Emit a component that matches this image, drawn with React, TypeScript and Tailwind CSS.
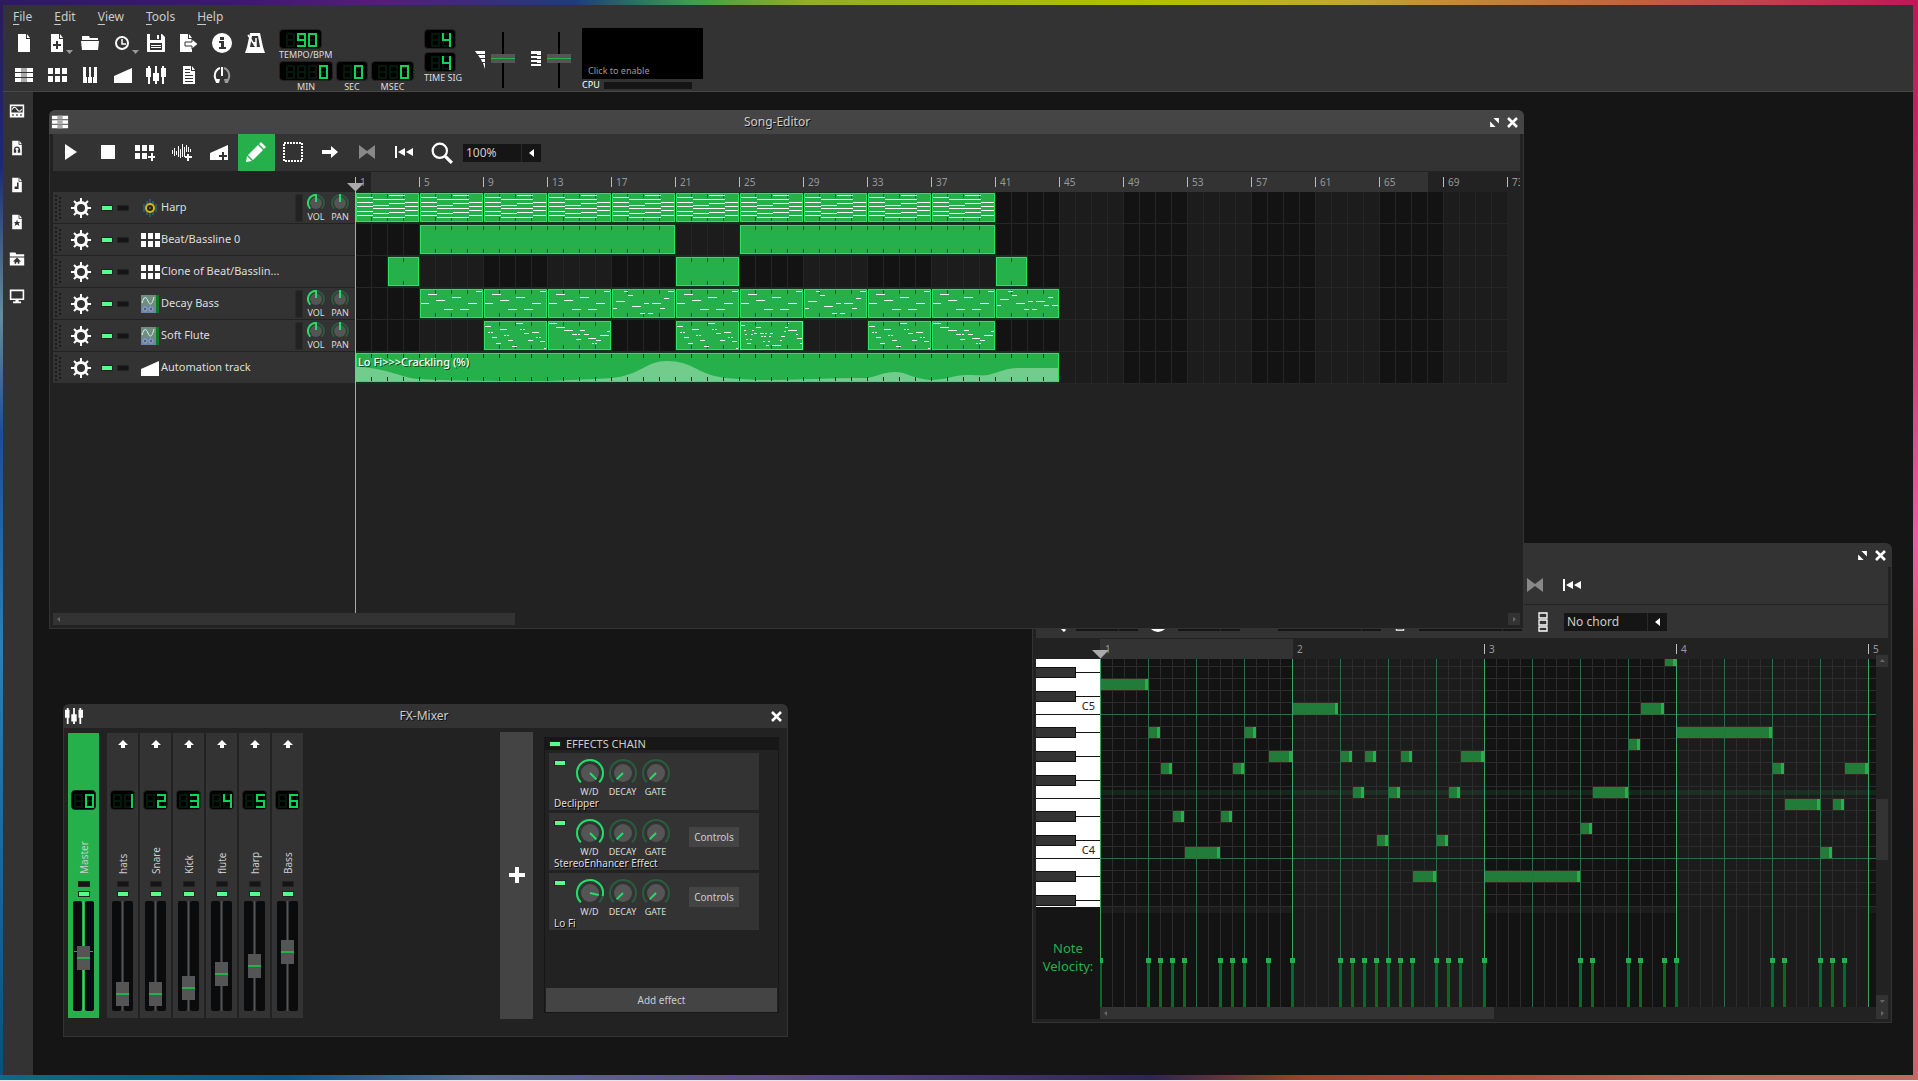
import type { ReactNode } from 'react'

type Note = [x: number, y: number, w: number]

/* ---------- icons ---------- */

function Svg({ children, size = 20, className = '' }: { children: ReactNode; size?: number; className?: string }) {
  return (
    <svg width={size} height={size} viewBox="0 0 20 20" fill="#fff" className={`shrink-0 ${className}`} aria-hidden="true">
      {children}
    </svg>
  )
}

const doc = 'M4 1h8v5h4v13H4z M13 1l3 4h-3z'
const plus = 'M15 11h2v3h3v2h-3v3h-2v-3h-3v-2h3z'

const icons: Record<string, ReactNode> = {
  new: <path d={doc} />,
  template: (
    <>
      <path d={doc} />
      <path d="M9 8h2v3h3v2h-3v3H9v-3H6v-2h3z" fill="#333" />
    </>
  ),
  open: <path d="M2 3h7l1 2h8v2H2z M1 8h18l-1 9H2z" />,
  recent: (
    <>
      <circle cx="9" cy="10" r="6" fill="none" stroke="#fff" strokeWidth="2" />
      <path d="M9 6v5h4" fill="none" stroke="#fff" strokeWidth="1.5" />
    </>
  ),
  save: (
    <>
      <path d="M1 1h15l3 3v15H1z" />
      <path d="M4 1h11v6H4z M4 10h12v7H4z" fill="#333" />
      <path d="M11 2h2v4h-2z M5 12h10v1H5z M5 14h10v1H5z" />
    </>
  ),
  export: (
    <>
      <path d="M1 1h8v5h4v13H1z M10 1l3 4h-3z" />
      <path d="M6 9h7V6l6 5-6 5v-3H6z" stroke="#333" strokeWidth="1" />
    </>
  ),
  info: (
    <>
      <circle cx="10" cy="10" r="10" />
      <path d="M8 4h4v3H8z M7 8h5v6h2v2H7v-2h2v-4H7z" fill="#333" />
    </>
  ),
  metronome: (
    <>
      <path d="M5 0h10l3 14 2 6H0l2-6z" />
      <path d="M7 3h6l2 11H5z" fill="#333" />
      <path d="M3 2l8 12M11 5v9" stroke="#fff" strokeWidth="1.5" />
      <path d="M8 9h3v4H9z" />
    </>
  ),
  song: (
    <>
      <path d="M1 3h18v4H1z M1 8h18v4H1z M1 13h18v4H1z" />
      <path d="M7 3h6v4H7z M7 8h6v4H7z M7 13h6v4H7z" fill="#aaa" />
    </>
  ),
  beat: <path d="M1 3h5v6H1z M8 3h5v6H8z M15 3h5v6h-5z M1 11h5v6H1z M8 11h5v6H8z M15 11h5v6h-5z" />,
  piano: (
    <>
      <path d="M3 2h14v16H3z" />
      <path d="M6 2h3v10H6z M11 2h3v10h-3z M7 12h1v6H7z M12 12h1v6h-1z" fill="#333" />
    </>
  ),
  automation: <path d="M1 11l18-8v15H1z" />,
  mixer: (
    <path d="M2 1h2v2h1v9H4v7H2v-7H0V3h2z M9 1h2v7h2v8h-2v3H9v-3H7V8h2z M16 1h2v2h2v9h-2v7h-2v-7h-1V3h1z" />
  ),
  notes: (
    <>
      <path d="M4 1h8v5h4v13H4z M13 1l3 4h-3z" />
      <path d="M6 4h5v1H6z M6 7h5v1H6z M6 10h8v1H6z M6 13h8v1H6z M6 16h8v1H6z" fill="#333" />
    </>
  ),
  rack: (
    <>
      <path d="M10 2v9" stroke="#fff" strokeWidth="2" />
      <path d="M5 16A8 8 0 0 1 8 3" fill="none" stroke="#fff" strokeWidth="2" />
      <path d="M12 3a8 8 0 0 1 3 13" fill="none" stroke="#999" strokeWidth="2" />
      <path d="M3 14h5l-1 4H4z" />
      <path d="M17 14h-5l1 4h3z" fill="#999" />
    </>
  ),
  play: <path d="M4 2l12 8-12 8z" />,
  stop: <path d="M3 3h14v14H3z" />,
  addBeat: (
    <path d="M0 3h5v6H0z M7 3h5v6H7z M14 3h5v6h-5z M0 11h5v6H0z M7 11h5v6H7z M16 11h2v3h2v2h-2v3h-2v-3h-3v-2h3z" />
  ),
  addSample: (
    <path d="M0 8h1v4H0z M2 6h1v8H2z M4 9h1v4H4z M6 4h1v11H6z M8 7h1v9H8z M10 2h1v13h-1z M12 5h1v10h-1z M14 3h1v7h-1z M16 5h1v5h-1z M18 7h1v3h-1z M15 12h2v2h3v2h-3v3h-2v-3h-2v-2h2z" />
  ),
  addAutomation: (
    <>
      <path d="M1 11l18-8v15H1z" />
      <path d={plus} transform="translate(-2 -1)" fill="#333" />
    </>
  ),
  pencil: <path d="M15 0l5 5-2 2-5-5z M12 3l5 5-10 10-5-5z M1 14l5 5-6 1z" />,
  select: (
    <path d="M1 1h18v18H1z" fill="none" stroke="#fff" strokeWidth="2" strokeDasharray="2 1" />
  ),
  move: <path d="M2 8h9V4l7 6-7 6v-4H2z" />,
  ruler: <path d="M2 3l8 6 8-6v14l-8-6-8 6z" fill="#888" />,
  rewind: <path d="M1 4h2v12H1z M11 6v8l-7-4z M19 6v8l-7-4z" />,
  zoom: (
    <>
      <circle cx="8" cy="8" r="6.5" fill="none" stroke="#fff" strokeWidth="2" />
      <path d="M13 13l6 6" stroke="#fff" strokeWidth="3" />
    </>
  ),
  chord: <path d="M6 1h8v5H6z M6 8h8v5H6z M6 15h8v4H6z" fill="none" stroke="#fff" strokeWidth="1.3" />,
  gear: (
    <>
      <circle cx="10" cy="10" r="5.5" fill="none" stroke="#fff" strokeWidth="3" />
      <path
        d="M10 0v4M10 16v4M0 10h4M16 10h4M3 3l3 3M14 14l3 3M17 3l-3 3M6 14l-3 3"
        stroke="#fff"
        strokeWidth="2"
      />
    </>
  ),
  harp: (
    <>
      <path d="M10 1v18M7 3v14M13 3v14M4 6v8M16 6v8" stroke="#2b7a99" strokeWidth="1" />
      <circle cx="10" cy="10" r="4" fill="#222" stroke="#d9b800" strokeWidth="2" />
      <circle cx="10" cy="10" r="1" fill="#8a7400" />
    </>
  ),
  synth: (
    <>
      <path d="M1 1h18v18H1z" fill="#6d8f80" />
      <path d="M1 12h15v7H1z" fill="#6f84a6" />
      <path d="M2 9c2-7 4-7 6-2s4 4 6-4" fill="none" stroke="#e6f0ea" />
      <circle cx="5" cy="15" r="2" fill="#4d5f90" stroke="#9dabc8" />
      <circle cx="11" cy="15" r="2" fill="#4d5f90" stroke="#9dabc8" />
      <path d="M16 1h3v18h-3z" fill="#0f7a2c" />
    </>
  ),
  sideInstruments: (
    <>
      <path
        d="M1 2h18v16H1z M3 4v8h14V4z M4 14v2h2v-2z M9 14v2h2v-2z M14 14v2h2v-2z"
        fillRule="evenodd"
      />
      <path d="M4 8c2-4 4-3 6 0s4 3 6 0" fill="none" stroke="#fff" strokeWidth="1.3" />
    </>
  ),
  sideSamples: (
    <>
      <path d={doc} />
      <path d="M7 14v-2a3 3 0 0 1 6 0v2" fill="none" stroke="#333" strokeWidth="1.5" />
      <path d="M6 12h3v4H6z M11 12h3v4h-3z" fill="#333" />
    </>
  ),
  sidePresets: (
    <>
      <path d={doc} />
      <path d="M10 7h2v8H7v-3h3z" fill="#333" />
    </>
  ),
  sideStar: (
    <>
      <path d={doc} />
      <path d="M10 7l1 3h3l-2 2 1 3-3-2-3 2 1-3-2-2h3z" fill="#333" />
    </>
  ),
  sideHome: (
    <>
      <path d="M1 2h7l1 2h10v3H1z M1 8h18v10H1z" />
      <path d="M10 8l5 5h-2v3h-2v-2H9v2H7v-3H5z" fill="#333" />
    </>
  ),
  sideComputer: <path d="M1 2h18v13H1z M3 4v9h14V4z M8 15h4v2h3v2H5v-2h3z" fillRule="evenodd" />,
  close: <path d="M4 4l12 12M16 4L4 16" stroke="#fff" strokeWidth="3.5" />,
  maximize: <path d="M8 2h10v10z M2 8v10h10z" />,
}

function Icon({ name, size }: { name: string; size?: number }) {
  return <Svg size={size}>{icons[name]}</Svg>
}

/* ---------- small controls ---------- */

const segments: Record<string, [number, number, number, number]> = {
  a: [0, 0, 9, 2],
  b: [7, 0, 2, 8],
  c: [7, 6, 2, 8],
  d: [0, 12, 9, 2],
  e: [0, 6, 2, 8],
  f: [0, 0, 2, 8],
  g: [0, 6, 9, 2],
}

const digitSegments: Record<string, string> = {
  ' ': '',
  '0': 'abcdef',
  '1': 'bc',
  '2': 'abged',
  '3': 'abgcd',
  '4': 'fgbc',
  '5': 'afgcd',
  '6': 'afgecd',
  '9': 'abcdfg',
}

function Lcd({ value, tight = false }: { value: string; tight?: boolean }) {
  return (
    <output
      aria-label={value.trim()}
      className={`flex h-5 w-fit items-center gap-[2px] rounded-sm border border-[#222] bg-black pt-[2px] ${tight ? 'pr-px pl-[2px]' : 'pr-1 pl-[6px]'}`}
    >
      {value.split('').map((char, i) => (
        <svg key={i} width="9" height="14" aria-hidden="true">
          {Object.entries(segments).map(([id, [x, y, w, h]]) => (
            <rect key={id} x={x} y={y} width={w} height={h} fill="#02190c" />
          ))}
          {Object.entries(segments)
            .filter(([id]) => digitSegments[char].includes(id))
            .map(([id, [x, y, w, h]]) => (
              <rect key={id} x={x} y={y} width={w} height={h} fill="#0bd556" />
            ))}
        </svg>
      ))}
    </output>
  )
}

function Led({ label, on = false }: { label: string; on?: boolean }) {
  return (
    <input
      type="checkbox"
      aria-label={label}
      defaultChecked={on}
      className="block h-[6px] w-3 shrink-0 appearance-none border border-[#222] bg-[#151515] checked:bg-[#55ff8c]"
    />
  )
}

function polar(c: number, r: number, deg: number) {
  const a = ((deg - 90) * Math.PI) / 180
  return `${c + r * Math.cos(a)} ${c + r * Math.sin(a)}`
}

function arc(c: number, r: number, from: number, to: number) {
  return `M${polar(c, r, from)} A${r} ${r} 0 ${to - from > 180 ? 1 : 0} 1 ${polar(c, r, to)}`
}

function Knob({ label, angle, lit, big = false }: { label: string; angle: number; lit: boolean; big?: boolean }) {
  const size = big ? 30 : 20
  const c = size / 2
  const r = big ? 13 : 8
  return (
    <label className={`flex flex-col items-center text-[9px] leading-[10px] text-[#ddd] ${big ? 'w-[33px]' : 'w-6'}`}>
      <span className="relative block">
        <svg width={size} height={size - 1} fill="none" strokeWidth="2" className="block">
          <path d={arc(c, r, -135, 135)} stroke="#2a5c3e" />
          {lit && <path d={arc(c, r, -135, angle)} stroke="#22dd6a" />}
          <circle cx={c} cy={c} r={big ? 9 : 6} fill="#555" />
          <path d={`M${big ? `${c} ${c}` : polar(c, 1, angle)} L${polar(c, 9, angle)}`} stroke="#22dd6a" />
        </svg>
        <input type="range" min={-135} max={135} defaultValue={angle} className="absolute inset-0 h-full w-full opacity-0" />
      </span>
      {label}
    </label>
  )
}

function Combo({ label, value, width }: { label: string; value: string; width: string }) {
  return (
    <span className={`relative block h-[18px] shrink-0 bg-[#151515] ${width}`}>
      <select
        aria-label={label}
        className="block h-full w-full appearance-none bg-transparent pl-[3px] text-xs leading-[18px] text-[#ccc]"
      >
        <option>{value}</option>
      </select>
      <svg width="20" height="18" className="pointer-events-none absolute top-0 right-0" aria-hidden="true">
        <path d="M0 0h1v18H0z" fill="#2a2a2a" />
        <path d="M13 5v8l-5-4z" fill="#fff" />
      </svg>
    </span>
  )
}

function ToolButton({ name, label, active = false }: { name: string; label: string; active?: boolean }) {
  return (
    <button
      aria-label={label}
      className={`flex h-[37px] w-[37px] shrink-0 items-center justify-center pr-px pb-px ${active ? 'bg-[#25b04b]' : ''}`}
    >
      <Icon name={name} />
    </button>
  )
}

function ScrollButton({ label, d }: { label: string; d: string }) {
  return (
    <button aria-label={label} className="block h-3 w-3 shrink-0 bg-[#333]">
      <svg width="12" height="12" className="block">
        <path d={d} fill="#666" />
      </svg>
    </button>
  )
}

const arrowLeft = 'M7 4v5L4 6z'
const arrowRight = 'M5 4v5l3-3z'

function TitleBar({ icon, title, tone, resizable = false }: { icon: string; title: string; tone: string; resizable?: boolean }) {
  return (
    <header className={`flex h-6 shrink-0 items-center rounded-t-md px-[2px] ${tone}`}>
      <Icon name={icon} size={18} />
      <h2 className="flex-1 pr-1 text-center text-xs text-[#ccc] [text-shadow:1px_1px_0_#111]">{title}</h2>
      <div className="flex items-center gap-[5px] pr-[2px]">
        {resizable && (
          <button aria-label={`Maximize ${title}`}>
            <Icon name="maximize" size={11} />
          </button>
        )}
        <button aria-label={`Close ${title}`}>
          <Icon name="close" size={15} />
        </button>
      </div>
    </header>
  )
}

/* ---------- main toolbar ---------- */

const menus = ['File', 'Edit', 'View', 'Tools', 'Help']

const fileTools = [
  ['new', 'New project'],
  ['template', 'New from template'],
  ['open', 'Open project'],
  ['recent', 'Recent projects'],
  ['save', 'Save'],
  ['export', 'Export'],
  ['info', 'About'],
  ['metronome', 'Metronome'],
]

const windowTools = [
  ['song', 'Song editor'],
  ['beat', 'Beat editor'],
  ['piano', 'Piano roll'],
  ['automation', 'Automation editor'],
  ['mixer', 'Mixer'],
  ['notes', 'Project notes'],
  ['rack', 'Controller rack'],
]

function ToolRow({ tools }: { tools: string[][] }) {
  return (
    <div className="flex h-8 items-center">
      {tools.map(([name, label]) => (
        <button key={name} aria-label={label} className="relative flex h-8 w-[33px] items-center justify-center">
          <Icon name={name} />
          {(name === 'template' || name === 'recent') && (
            <svg width="7" height="4" className="absolute right-0 bottom-[5px]">
              <path d="M0 0h7L3.500 4z" fill="#999" />
            </svg>
          )}
        </button>
      ))}
    </div>
  )
}

function LabelledLcd({ value, label }: { value: string; label: string }) {
  return (
    <div className="flex flex-col items-center text-[9px] leading-3 text-[#ddd]">
      <Lcd value={value} />
      {label}
    </div>
  )
}

function MasterSlider({ label, children }: { label: string; children: ReactNode }) {
  return (
    <div className="flex items-center gap-[6px]">
      <svg width="10" height="18" fill="#fff" aria-hidden="true">
        {children}
      </svg>
      <input
        type="range"
        aria-label={label}
        min={0}
        max={47}
        defaultValue={25}
        className="h-14 w-6 appearance-none bg-[linear-gradient(90deg,transparent_11px,#000_11px,#000_13px,transparent_13px)] [direction:rtl] [writing-mode:vertical-lr] [&::-webkit-slider-thumb]:h-[9px] [&::-webkit-slider-thumb]:w-6 [&::-webkit-slider-thumb]:appearance-none [&::-webkit-slider-thumb]:bg-[linear-gradient(#555_4px,#25b04b_4px,#25b04b_5px,#555_5px)]"
      />
    </div>
  )
}

function MainBar() {
  return (
    <header className="flex h-[87px] shrink-0 border-b border-[#484848] bg-[#333]">
      <div className="w-[275px] shrink-0">
        <nav className="flex h-[22px] items-center gap-[22px] pt-[2px] pl-[10px] text-xs text-[#ccc]">
          {menus.map((m) => (
            <button key={m} className="underline-offset-3 first-letter:underline">
              {m}
            </button>
          ))}
        </nav>
        <div className="pl-1">
          <ToolRow tools={fileTools} />
          <ToolRow tools={windowTools} />
        </div>
      </div>

      <div className="flex pt-6">
        <div className="mr-3 w-[134px] pl-px">
          <div className="flex w-fit flex-col text-[9px] leading-3 text-[#ddd]">
            <Lcd value=" 90" />
            TEMPO/BPM
          </div>
          <div className="flex gap-[3px]">
            <LabelledLcd value="   0" label="MIN" />
            <LabelledLcd value=" 0" label="SEC" />
            <LabelledLcd value="  0" label="MSEC" />
          </div>
        </div>
        <div className="mr-[13px] flex w-[38px] flex-col gap-[3px] text-[9px] leading-3 whitespace-nowrap text-[#ddd]">
          <Lcd value=" 4" />
          <div>
            <Lcd value=" 4" />
            TIME SIG
          </div>
        </div>
        <div className="flex items-start gap-4 pt-[3px]">
          <MasterSlider label="Master volume">
            <path d="M0 0h10v3H2z M3 4h7v3H5z M6 8h4v3H7z M8 12h2v6z" />
          </MasterSlider>
          <MasterSlider label="Master pitch">
            <path d="M0 0h10v15H0v-2h6v-2H0V9h6V7H0V5h6V3H0z" />
            <path d="M6 4h4v1H6z M6 8h4v1H6z M6 12h4v1H6z" fill="#333" />
          </MasterSlider>
        </div>
        <div className="-mt-px ml-[11px] w-[121px] text-[9px]">
          <button className="flex h-[51px] w-full items-end bg-black px-[6px] pb-[2px] leading-3 text-[#999]">
            Click to enable
          </button>
          <div className="flex h-3 items-center gap-1 text-white">
            CPU
            <div className="h-[7px] w-[88px] bg-[#151515]" />
          </div>
        </div>
      </div>
    </header>
  )
}

const sideTabs = [
  ['sideInstruments', 'Instrument plugins'],
  ['sideSamples', 'My samples'],
  ['sidePresets', 'My presets'],
  ['sideStar', 'My projects'],
  ['sideHome', 'My home'],
  ['sideComputer', 'Root directory'],
]

function SideBar() {
  return (
    <nav className="w-[30px] shrink-0 bg-[#333]">
      {sideTabs.map(([name, label]) => (
        <button key={name} aria-label={label} className="flex h-[37px] w-7 items-center justify-center">
          <Icon name={name} size={16} />
        </button>
      ))}
    </nav>
  )
}

/* ---------- song editor ---------- */

const tracks = [
  { name: 'Harp', icon: 'harp', instrument: true },
  { name: 'Beat/Bassline 0', icon: 'beat', instrument: false },
  { name: 'Clone of Beat/Basslin...', icon: 'beat', instrument: false },
  { name: 'Decay Bass', icon: 'synth', instrument: true },
  { name: 'Soft Flute', icon: 'synth', instrument: true },
  { name: 'Automation track', icon: 'automation', instrument: false },
]

const songTools = [
  ['play', 'Play song'],
  ['stop', 'Stop song'],
  ['addBeat', 'Add beat/bassline'],
  ['addSample', 'Add sample track'],
  ['addAutomation', 'Add automation track'],
  ['pencil', 'Draw mode'],
  ['select', 'Edit mode'],
  ['move', 'Auto scroll'],
  ['ruler', 'Loop points'],
  ['rewind', 'After stopping go back to beginning'],
]

const harp: Note[] = [
  [1, 4, 16], [33, 2, 16], [17, 6, 32], [1, 9, 16], [49, 9, 13], [33, 10, 16], [17, 12, 16], [1, 13, 16], [49, 13, 13],
  [17, 15, 32], [49, 17, 13], [1, 18, 16], [33, 19, 16], [17, 20, 16], [1, 22, 16], [49, 22, 13], [17, 24, 32],
]
const bassA: Note[] = [
  [8, 5, 9], [56, 2, 6], [32, 8, 9], [16, 11, 9], [1, 14, 8], [48, 14, 9], [24, 20, 9], [40, 20, 9],
]
const bassB: Note[] = [
  [12, 2, 4], [56, 2, 6], [16, 6, 5], [52, 9, 5], [4, 12, 9], [32, 14, 5], [40, 14, 9], [20, 17, 9], [1, 19, 4],
  [48, 19, 5], [28, 24, 5], [36, 24, 5],
]
const bassC: Note[] = [
  [12, 2, 5], [16, 6, 5], [4, 10, 9], [52, 8, 5], [32, 12, 5], [40, 12, 9], [20, 14, 9], [1, 16, 4], [48, 16, 5],
  [56, 16, 6], [28, 20, 5], [36, 20, 5],
]
const fluteA: Note[] = [
  [32, 2, 7], [1, 5, 6], [16, 8, 7], [36, 8, 2], [39, 8, 2], [4, 11, 2], [7, 11, 2], [48, 11, 7], [40, 12, 5],
  [20, 14, 2], [23, 14, 2], [8, 16, 5], [52, 16, 2], [55, 16, 2], [24, 19, 5], [44, 19, 5], [56, 20, 5], [12, 22, 5],
  [28, 25, 5], [60, 27, 2],
]
const fluteB: Note[] = [
  [1, 2, 8], [8, 6, 9], [16, 9, 9], [59, 10, 3], [32, 9, 5], [24, 13, 5], [30, 13, 2], [36, 13, 5], [52, 14, 9],
  [40, 17, 8], [28, 18, 5], [48, 19, 5], [44, 22, 2], [47, 22, 2],
]
const fluteC: Note[] = [
  [1, 4, 4], [48, 2, 1], [45, 6, 3], [16, 6, 5], [4, 9, 2], [12, 9, 2], [44, 10, 2], [48, 9, 9], [5, 13, 2],
  [11, 13, 2], [14, 12, 3], [20, 12, 4], [25, 12, 2], [30, 12, 3], [21, 15, 2], [24, 15, 2], [29, 15, 2], [41, 15, 4],
  [56, 13, 2], [57, 17, 5], [6, 18, 2], [10, 18, 2], [23, 20, 2], [28, 20, 2], [40, 19, 2], [7, 22, 4], [60, 22, 2],
  [26, 24, 3], [32, 24, 9],
]

type Clip = { row: number; start: number; bars: number; notes?: Note[]; selected?: boolean }

const clips: Clip[] = [
  ...[0, 4, 8, 12, 16, 20, 24, 28, 32, 36].map((start) => ({ row: 0, start, bars: 4, notes: harp })),
  { row: 1, start: 4, bars: 16 },
  { row: 1, start: 24, bars: 16 },
  { row: 2, start: 2, bars: 2 },
  { row: 2, start: 20, bars: 4 },
  { row: 2, start: 40, bars: 2 },
  ...[4, 8, 12, 20, 24, 32, 36].map((start) => ({ row: 3, start, bars: 4, notes: bassA })),
  { row: 3, start: 16, bars: 4, notes: bassB },
  { row: 3, start: 28, bars: 4, notes: bassB },
  { row: 3, start: 40, bars: 4, notes: bassC },
  { row: 4, start: 8, bars: 4, notes: fluteA },
  { row: 4, start: 12, bars: 4, notes: fluteB },
  { row: 4, start: 20, bars: 4, notes: fluteA },
  { row: 4, start: 24, bars: 4, notes: fluteC, selected: true },
  { row: 4, start: 32, bars: 4, notes: fluteA },
  { row: 4, start: 36, bars: 4, notes: fluteB },
  { row: 5, start: 0, bars: 44 },
]

const automation =
  'M0 14C12 14 20 16 30 18C42 21 50 25 62 26C96 28 150 28 190 28C215 27 240 26 256 25C285 22 290 8 311 8C336 8 340 20 364 24' +
  'C372 26 390 26 404 27C440 27 480 25 511 25C522 23 528 19 539 19C550 19 558 26 574 27C590 27 598 22 611 22C622 22 628 23 632 22' +
  'C645 19 650 15 664 15H702V28H0z'

function SongClip({ row, start, bars, notes, selected }: Clip) {
  const w = bars * 16 - 1
  const marks = Array.from({ length: bars - 1 }, (_, i) => (i + 1) * 16 - 1)
  return (
    <g transform={`translate(${start * 16 + 1} ${row * 32 + 1})`}>
      <rect x={-1} y={-1} width={w + 2} height={31} fill="#12351d" />
      <rect x={0.5} y={0.5} width={w - 1} height={28} fill="#25b04b" stroke={selected ? '#4dff80' : '#2be35f'} />
      {row === 5 && <path d={automation} fill="#72cc8b" />}
      {marks.map((x) => (
        <path key={x} d={`M${x} 1h1v4h-1z M${x} 24h1v4h-1z`} fill={row === 5 ? '#063a14' : '#0f6326'} />
      ))}
      {notes?.map(([x, y, nw], i) => (
        <rect key={i} x={x} y={y} width={nw} height={1} fill="#fff" />
      ))}
    </g>
  )
}

function SongGrid() {
  return (
    <svg width="1152" height="192" className="block" aria-label="Song arrangement">
      {Array.from({ length: 18 }, (_, i) => (
        <rect key={i} x={i * 64} width="64" height="192" fill={i % 2 ? '#1c1c1c' : '#131313'} />
      ))}
      {Array.from({ length: 73 }, (_, i) => (
        <rect key={i} x={i * 16} width="1" height="192" fill="#262626" />
      ))}
      {tracks.map((t, i) => (
        <rect key={t.name} y={i * 32 + 31} width="1152" height="1" fill="#262626" />
      ))}
      {clips.map((clip) => (
        <SongClip key={`${clip.row}-${clip.start}`} {...clip} />
      ))}
    </svg>
  )
}

function TrackHead({ name, icon, instrument }: { name: string; icon: string; instrument: boolean }) {
  return (
    <li className="flex h-8 items-center border-b border-[#222] bg-[#333]">
      <svg width="10" height="28" className="ml-[2px]" aria-hidden="true">
        <path d="M1 1v26M5 3v24" stroke="#1c1c1c" strokeWidth="2" strokeDasharray="2 2" />
      </svg>
      <button aria-label={`${name} actions`} className="ml-[6px]">
        <Icon name="gear" />
      </button>
      <div className="ml-[10px] flex gap-1">
        <Led label={`Mute ${name}`} on />
        <Led label={`Solo ${name}`} />
      </div>
      <button className="ml-[11px] flex items-center gap-px text-[11px] whitespace-nowrap text-[#ddd]">
        <Icon name={icon} />
        {name}
      </button>
      {instrument && (
        <div className="ml-auto flex h-[29px] items-start pr-[3px]">
          <span className="mt-px mr-px h-7 w-2 border border-[#2a2a2a] bg-[#222]" />
          <Knob label="VOL" angle={0} lit />
          <Knob label="PAN" angle={0} lit={false} />
        </div>
      )}
    </li>
  )
}

function SongEditor() {
  return (
    <section className="absolute top-[18px] left-4 z-20 flex h-[519px] w-[1475px] flex-col">
      <TitleBar icon="song" title="Song-Editor" tone="bg-[#454545]" resizable />
      <div className="relative flex min-h-0 flex-1 flex-col border border-t-0 border-[#333] bg-[#222] px-[3px] pb-[3px]">
        <div className="flex h-[37px] shrink-0 items-center bg-[#333]">
          {songTools.map(([name, label]) => (
            <ToolButton key={name} name={name} label={label} active={name === 'pencil'} />
          ))}
          <span className="mr-[10px] ml-2">
            <Icon name="zoom" size={22} />
          </span>
          <Combo label="Zoom" value="100%" width="w-[78px]" />
        </div>

        <div className="mt-px ml-[302px] flex h-5 shrink-0 items-center overflow-hidden bg-[linear-gradient(90deg,#222_16px,#333_16px,#333_1073px,#222_1073px)]">
          {Array.from({ length: 19 }, (_, i) => (
            <span key={i} className="h-[10px] w-16 shrink-0 border-l border-[#bbb] pl-1 text-[10px] leading-[10px] text-[#999]">
              {i * 4 + 1}
            </span>
          ))}
        </div>

        <div className="flex shrink-0">
          <ul className="w-[302px] shrink-0">
            {tracks.map((t) => (
              <TrackHead key={t.name} {...t} />
            ))}
          </ul>
          <div className="relative">
            <SongGrid />
            <span className="absolute top-[162px] left-[3px] text-[11px] leading-4 font-medium text-white [text-shadow:1px_1px_0_#0a4a1c]">
              Lo Fi&gt;&gt;&gt;Crackling (%)
            </span>
          </div>
        </div>

        <div className="flex-1" />
        <div className="flex h-3 shrink-0 justify-between">
          <div className="flex w-[462px] bg-[#333]">
            <ScrollButton label="Scroll left" d={arrowLeft} />
          </div>
          <ScrollButton label="Scroll right" d={arrowRight} />
        </div>

        {/* play head */}
        <svg width="17" height="9" className="absolute top-[49px] left-[297px]">
          <path d="M0 0h17L8.500 8.500z" fill="#aaa" />
        </svg>
        <div className="absolute top-[57px] bottom-[15px] left-[305px] w-px bg-[#aaa]" />
      </div>
    </section>
  )
}

/* ---------- piano roll ---------- */

// [column, semitone row, columns]
const pianoNotes: Note[] = [
  [0, 0, 4], [4, 4, 1], [5, 7, 1], [6, 11, 1], [7, 14, 3], [10, 11, 1], [11, 7, 1], [12, 4, 1], [14, 6, 2],
  [16, 2, 4], [20, 6, 1], [21, 9, 1], [22, 6, 1], [23, 13, 1], [24, 9, 1], [25, 6, 1], [26, 16, 2], [28, 13, 1],
  [29, 9, 1], [30, 6, 2], [32, 16, 8], [40, 12, 1], [41, 9, 3], [44, 5, 1], [45, 2, 2], [47, -2, 1], [48, 4, 8],
  [56, 7, 1], [57, 10, 3], [60, 14, 1], [61, 10, 1], [62, 7, 2],
]

function PianoGrid() {
  return (
    <svg width="776" height="348" className="block" aria-label="Notes">
      {[0, 1, 2, 3, 4].map((bar) => (
        <rect key={bar} x={bar * 192} width="192" height="348" fill={bar % 2 ? '#1c1c1c' : '#131313'} />
      ))}
      <rect y="248" width="776" height="6" fill="#1c1c1c" />
      {Array.from({ length: 21 }, (_, i) => (
        <rect key={i} y={i * 12 + 7} width="776" height="1" fill="#2c2c2c" />
      ))}
      {Array.from({ length: 65 }, (_, i) => (
        <rect key={i} x={i * 12} width="1" height="348" fill="#2c2c2c" />
      ))}
      <rect y="131" width="776" height="5" fill="#25b04b" opacity="0.13" />
      <rect y="55" width="776" height="1" fill="#2c6e44" />
      <rect y="199" width="776" height="1" fill="#2c6e44" />
      {pianoNotes.map(([col, row, len]) => {
        const w = len * 12 - (col === 16 ? 3 : 1)
        return (
          <g key={`${col}-${row}`} transform={`translate(${col * 12 + 1} ${row * 12 + 20})`}>
            <rect width={w} height="11" fill="#217c39" />
            <rect x={w - 3} width="3" height="11" fill="#25b04b" />
          </g>
        )
      })}
      {Array.from({ length: 17 }, (_, i) => (
        <rect key={i} x={i * 48} width="1" height="348" fill={i % 4 ? '#2c6e44' : '#3fa163'} />
      ))}
      {pianoNotes.map(([col]) => (
        <g key={col} transform={`translate(${col * 12} 299)`}>
          <rect x="-1" y="5" width="3" height="44" fill="#076b28" />
          <rect x="-2" width="5" height="5" fill="#25b04b" />
        </g>
      ))}
    </svg>
  )
}

function PianoKeys() {
  return (
    <div className="relative h-[248px] bg-white text-[11px] leading-4 text-[#222]">
      <svg width="64" height="248" className="block" aria-hidden="true">
        {[13, 37, 73, 97, 121, 157, 181, 217, 241].map((y) => (
          <rect key={y} x="40" y={y} width="24" height="1" fill="#151515" />
        ))}
        {[55, 139, 199].map((y) => (
          <rect key={y} y={y} width="64" height="1" fill="#151515" />
        ))}
        {[8, 32, 68, 92, 116, 152, 176, 212, 236].map((y) => (
          <rect key={y} x="-0.5" y={y + 0.5} width="40" height="10" fill="#333" stroke="#111" />
        ))}
      </svg>
      <span className="absolute top-[39px] right-[5px]">C5</span>
      <span className="absolute top-[183px] right-[5px]">C4</span>
    </div>
  )
}

function PianoRoll() {
  return (
    <section className="absolute top-[451px] left-[999px] z-10 flex h-[480px] w-[860px] flex-col">
      <TitleBar icon="piano" title="Piano-Roll" tone="bg-[#333]" resizable />
      <div className="flex flex-1 flex-col border border-t-0 border-[#333] bg-[#222] px-[3px] pb-[3px]">
        <div className="flex h-[37px] shrink-0 bg-[#333]">
          <div className="w-[481px]" />
          <ToolButton name="ruler" label="Loop points" />
          <ToolButton name="rewind" label="Go back to beginning" />
        </div>
        <div className="mt-px flex h-[33px] shrink-0 items-center bg-[#333]">
          <div className="flex w-[488px] items-center gap-[10px] overflow-hidden pl-[10px]">
            <Icon name="zoom" />
            <Combo label="Zoom level" value="100%" width="w-[62px]" />
            <Icon name="info" />
            <Combo label="Quantization" value="1/16" width="w-[62px]" />
            <Icon name="recent" size={18} />
            <Combo label="Note length" value="Last note" width="w-[103px]" />
            <Icon name="chord" size={18} />
            <Combo label="Scale" value="No scale" width="w-[103px]" />
          </div>
          <span className="mr-[11px] ml-[9px]">
            <Icon name="chord" />
          </span>
          <Combo label="Chord" value="No chord" width="w-[103px]" />
        </div>

        <div className="mt-px flex min-h-0 flex-1">
          <div className="flex w-16 shrink-0 flex-col pt-5">
            <PianoKeys />
            <div className="flex flex-1 flex-col items-center bg-[#151515] pt-8 text-center text-[13px] leading-[18px] text-[#25b04b]">
              Note Velocity:
            </div>
          </div>
          <div className="flex w-[776px] flex-col">
            <div className="relative flex h-5 shrink-0 items-center bg-[linear-gradient(90deg,#333_193px,#222_193px)]">
              {[1, 2, 3, 4, 5].map((n) => (
                <span
                  key={n}
                  className={`h-[10px] shrink-0 border-l pl-1 text-[10px] leading-[10px] text-[#999] ${n === 5 ? 'w-2' : 'w-48'} ${n < 3 ? 'border-transparent' : 'border-[#bbb]'}`}
                >
                  {n}
                </span>
              ))}
              <svg width="17" height="9" className="absolute bottom-0 -left-2">
                <path d="M0 0h17L8.500 8.500z" fill="#aaa" />
              </svg>
            </div>
            <PianoGrid />
            <div className="flex h-3 w-[394px] bg-[#333]">
              <ScrollButton label="Scroll notes left" d={arrowLeft} />
            </div>
          </div>
          <div className="flex w-3 flex-col pt-4">
            <ScrollButton label="Scroll notes up" d="M4 7h5L6 4z" />
            <div className="mt-[132px] h-[61px] bg-[#333]" />
            <div className="flex-1" />
            <ScrollButton label="Scroll notes down" d="M4 5h5L6 8z" />
            <ScrollButton label="Scroll notes right" d={arrowRight} />
          </div>
        </div>
      </div>
    </section>
  )
}

/* ---------- mixer ---------- */

const channels = [
  { name: 'Master', value: 41 },
  { name: 'hats', value: 5 },
  { name: 'Snare', value: 5 },
  { name: 'Kick', value: 11 },
  { name: 'flute', value: 25 },
  { name: 'harp', value: 33 },
  { name: 'Bass', value: 47 },
]

const effects = [
  { name: 'Declipper', wet: 135, controls: false },
  { name: 'StereoEnhancer Effect', wet: 135, controls: true },
  { name: 'Lo Fi', wet: 103, controls: true },
]

function Channel({ index, name, value }: { index: number; name: string; value: number }) {
  const master = index === 0
  return (
    <div className={`flex h-[285px] w-[31px] shrink-0 flex-col items-center ${master ? 'bg-[#25b04b]' : 'bg-[#333]'}`}>
      <div className="flex h-[57px] w-full justify-center pt-[7px]">
        {!master && (
          <button aria-label={`Send to ${name}`} className="h-fit">
            <svg width="10" height="8" className="block" fill="#fff">
              <path d="M5 0l5 5H7v3H3V5H0z" />
            </svg>
          </button>
        )}
      </div>
      <Lcd value={` ${index}`} tight />
      <span className="flex h-16 rotate-180 items-center text-[10px] leading-3 text-[#ccc] [writing-mode:vertical-rl]">{name}</span>
      <div className="mt-[7px] flex flex-col gap-1">
        <Led label={`Mute channel ${name}`} />
        <Led label={`Enable channel ${name}`} on />
      </div>
      <div className="relative mt-1 flex h-[110px] gap-[3px]">
        <span className="w-[9px] rounded-xs bg-[#0a0b0c]" />
        <span className="w-[9px] rounded-xs bg-[#0a0b0c]" />
        <span className={`absolute inset-y-0 left-[10px] w-px ${master ? 'bg-[#3fd068]' : 'bg-[#555]'}`} />
        {master && <span className="absolute top-[50px] right-px left-px h-px bg-[#25b04b]" />}
        <input
          type="range"
          aria-label={`${name} volume`}
          min={0}
          max={86}
          defaultValue={value}
          className="absolute inset-y-0 left-1 h-[110px] w-[13px] appearance-none bg-transparent [direction:rtl] [writing-mode:vertical-lr] [&::-webkit-slider-thumb]:h-6 [&::-webkit-slider-thumb]:w-[13px] [&::-webkit-slider-thumb]:appearance-none [&::-webkit-slider-thumb]:bg-[linear-gradient(#555_11px,#25b04b_11px,#25b04b_13px,#555_13px)]"
        />
      </div>
    </div>
  )
}

function Effect({ name, wet, controls }: { name: string; wet: number; controls: boolean }) {
  return (
    <li className="flex h-[57px] w-[210px] flex-col bg-[#333] pt-[5px]">
      <div className="flex h-10">
        <div className="pt-[2px] pr-[7px] pl-[5px]">
          <Led label={`Enable ${name}`} on />
        </div>
        <Knob label="W/D" angle={wet} lit big />
        <Knob label="DECAY" angle={-135} lit={false} big />
        <Knob label="GATE" angle={-135} lit={false} big />
        {controls && <button className="mt-[9px] ml-[17px] h-5 w-[50px] bg-[#444] text-[10px] text-[#ccc]">Controls</button>}
      </div>
      <span className="pl-[5px] text-[10px] leading-[11px] text-[#ddd] [text-shadow:1px_1px_0_#000]">{name}</span>
    </li>
  )
}

function Mixer() {
  return (
    <section className="absolute top-[612px] left-[30px] flex h-[333px] w-[725px] flex-col">
      <TitleBar icon="mixer" title="FX-Mixer" tone="bg-[#333]" />
      <div className="flex flex-1 items-start border border-t-0 border-[#333] bg-[#222] pt-1 pl-1">
        <div className="flex flex-1 gap-[2px] pt-px">
          {channels.map((c, i) => (
            <div key={c.name} className={i === 0 ? 'mr-[6px]' : ''}>
              <Channel index={i} {...c} />
            </div>
          ))}
        </div>
        <button aria-label="New channel" className="flex h-[287px] w-[33px] items-center justify-center bg-[#444] pb-px">
          <svg width="16" height="16" fill="#fff">
            <path d="M6 0h4v6h6v4h-6v6H6v-6H0V6h6z" />
          </svg>
        </button>
        <div className="mt-[5px] mr-2 ml-[11px] flex h-[276px] w-[235px] flex-col border border-[#171717]">
          <div className="flex h-3 items-center gap-[5px] bg-[#171717] pl-1 text-[11px] text-[#ccc]">
            <Led label="Effects chain" on />
            EFFECTS CHAIN
          </div>
          <ul className="mt-[3px] flex flex-1 flex-col gap-[3px] pl-1">
            {effects.map((e) => (
              <Effect key={e.name} {...e} />
            ))}
          </ul>
          <button className="mx-px h-6 bg-[#444] text-[10px] text-[#ccc]">Add effect</button>
        </div>
      </div>
    </section>
  )
}

export default function App() {
  return (
    <div className="flex h-screen flex-col overflow-hidden bg-[#151515] font-['Noto_Sans',sans-serif]">
      {/* wallpaper shows around the window */}
      <div className="h-[5px] shrink-0 bg-[linear-gradient(90deg,#2d1b5c,#3c1a68_12%,#571d78_20%,#1e3d78_30%,#3f9c50_36%,#93ad25_42%,#b3c100_60%,#c0a82e_70%,#c0793c_80%,#c24a4a_90%,#c21558)]" />
      <div className="flex min-h-0 flex-1">
        <div className="w-[3px] shrink-0 bg-[linear-gradient(#2b1a5c,#1c2a70_15%,#5f8f9f_29%,#1d4e94_40%,#2f7fb0_60%,#0b4f7c)]" />
        <main className="flex min-w-0 flex-1 flex-col">
          <MainBar />
          <div className="flex min-h-0 flex-1">
            <SideBar />
            <div className="relative flex-1 overflow-hidden">
              <SongEditor />
              <PianoRoll />
              <Mixer />
            </div>
          </div>
        </main>
        <div className="w-[5px] shrink-0 bg-[linear-gradient(#c21558,#d2396f_30%,#ef5fa8_50%,#e4606a_60%,#cc6470)]" />
      </div>
      <div className="h-[5px] shrink-0 bg-[linear-gradient(90deg,#0b6a86,#07568a_15%,#5a6a9f_25%,#5f4a8c_40%,#2d2552_60%,#9c4420_68%,#b04a3a_78%,#b86a5a_90%,#c06a60)]" />
      <div className="h-px shrink-0 bg-[#e6e6e6]" />
    </div>
  )
}
